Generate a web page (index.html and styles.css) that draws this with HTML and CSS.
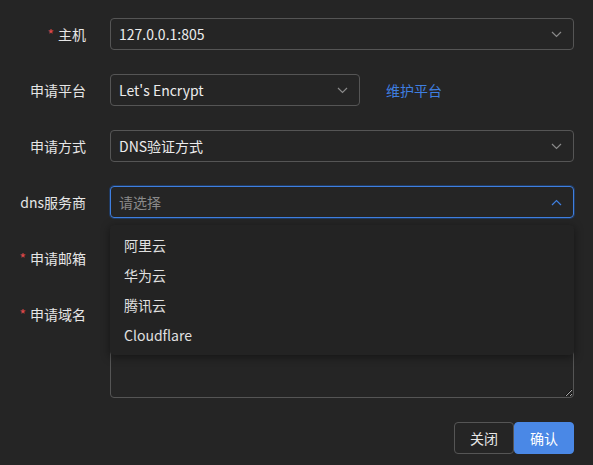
FILE: index.html
```html
<!DOCTYPE html>
<html lang="zh-CN">
<head>
<meta charset="utf-8">
<link rel="stylesheet" href="styles.css">
</head>
<body>
<div class="form">
  <div class="row">
    <div class="label"><span class="req">*</span>主机</div>
    <div class="control">
      <div class="select"><span class="val">127.0.0.1:805</span><svg class="arrow" width="11" height="7" viewBox="0 0 11 7"><path d="M1 1 L5.5 5.5 L10 1" fill="none" stroke="currentColor" stroke-width="1.2"/></svg></div>
    </div>
  </div>
  <div class="row">
    <div class="label">申请平台</div>
    <div class="control">
      <div class="select narrow"><span class="val">Let's Encrypt</span><svg class="arrow" width="11" height="7" viewBox="0 0 11 7"><path d="M1 1 L5.5 5.5 L10 1" fill="none" stroke="currentColor" stroke-width="1.2"/></svg></div>
      <a class="link">维护平台</a>
    </div>
  </div>
  <div class="row">
    <div class="label">申请方式</div>
    <div class="control">
      <div class="select"><span class="val">DNS验证方式</span><svg class="arrow" width="11" height="7" viewBox="0 0 11 7"><path d="M1 1 L5.5 5.5 L10 1" fill="none" stroke="currentColor" stroke-width="1.2"/></svg></div>
    </div>
  </div>
  <div class="row">
    <div class="label">dns服务商</div>
    <div class="control anchor">
      <div class="select focus"><span class="placeholder">请选择</span><svg class="arrow up" width="11" height="7" viewBox="0 0 11 7"><path d="M1 6 L5.5 1.5 L10 6" fill="none" stroke="currentColor" stroke-width="1.2"/></svg></div>
      <div class="dropdown">
        <div class="item">阿里云</div>
        <div class="item">华为云</div>
        <div class="item">腾讯云</div>
        <div class="item">Cloudflare</div>
      </div>
    </div>
  </div>
  <div class="row">
    <div class="label"><span class="req">*</span>申请邮箱</div>
    <div class="control">
      <div class="input"></div>
    </div>
  </div>
  <div class="row">
    <div class="label"><span class="req">*</span>申请域名</div>
    <div class="control">
      <textarea class="textarea"></textarea>
    </div>
  </div>
  <div class="footer">
    <button class="btn">关闭</button>
    <button class="btn primary">确认</button>
  </div>
</div>
</body>
</html>
```
FILE: styles.css
```css
html, body {
  margin: 0;
  padding: 0;
  background: #252525;
  color-scheme: dark;
}
body {
  font-family: "Noto Sans CJK SC", "Microsoft YaHei", sans-serif;
  font-size: 14px;
  color: #e6e6e6;
}
.form {
  padding: 18px 19px 0 0;
}
.row {
  display: flex;
  margin-bottom: 24px;
}
.label {
  width: 110px;
  box-sizing: border-box;
  padding-right: 24px;
  text-align: right;
  line-height: 32px;
  height: 32px;
  color: #e6e6e6;
  flex-shrink: 0;
}
.req {
  color: #e0494b;
  margin-right: 4px;
}
.control {
  flex: 1;
  display: flex;
  align-items: center;
}
.anchor {
  position: relative;
}
.select, .input {
  flex: 1;
  height: 32px;
  box-sizing: border-box;
  border: 1px solid #555555;
  border-radius: 4px;
  padding: 0 11px 0 8px;
  display: flex;
  align-items: center;
  justify-content: space-between;
  color: #ececec;
}
.select.narrow {
  flex: 0 0 250px;
}
.select.focus {
  border-color: #3f7fe0;
  box-shadow: 0 0 0 1px #203a60;
}
.placeholder {
  color: #8a8a8a;
}
.arrow {
  color: #8a8a8a;
}
.arrow.up {
  color: #3f7fe0;
}
.link {
  color: #3f7fe0;
  margin-left: 26px;
  cursor: pointer;
}
.dropdown {
  position: absolute;
  left: 0;
  right: 0;
  top: 39px;
  background: #232323;
  border-radius: 4px;
  padding: 5px 0;
  box-shadow: 0 2px 10px rgba(0, 0, 0, 0.45);
  z-index: 10;
}
.item {
  height: 30px;
  line-height: 30px;
  padding: 0 14px;
  color: #e0e0e0;
}
.textarea {
  flex: 1;
  height: 100px;
  box-sizing: border-box;
  border: 1px solid #555555;
  border-radius: 4px;
  background: transparent;
  resize: vertical;
  font-family: inherit;
  color: #e6e6e6;
  margin: 0;
  outline: none;
}
.row:last-of-type {
  margin-bottom: 25px;
}
.footer {
  display: flex;
  justify-content: flex-end;
}
.btn {
  height: 32px;
  width: 60px;
  box-sizing: border-box;
  border: 1px solid #555555;
  border-radius: 4px;
  background: transparent;
  color: #e6e6e6;
  font-family: inherit;
  font-size: 14px;
  padding: 0;
}
.btn.primary {
  background: #4a88e6;
  border-color: #4a88e6;
  color: #ffffff;
}
```
